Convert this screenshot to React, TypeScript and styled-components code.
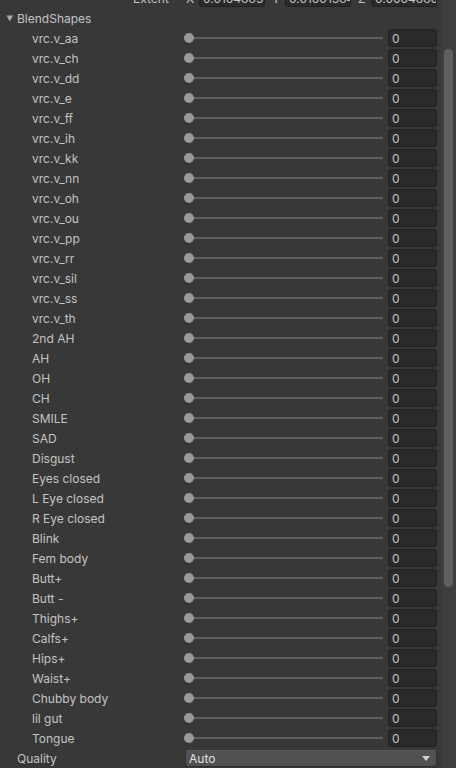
import React from "react";
import styled, { createGlobalStyle } from "styled-components";

const Global = createGlobalStyle`
  html, body { margin: 0; padding: 0; background: #383838; }
  body { font-family: Inter, "Noto Sans", sans-serif; font-size: 12px; color: #c4c4c4; }
  #root { width: 456px; height: 768px; overflow: hidden; }
`;

const Frame = styled.div`
  display: flex;
  width: 456px;
  height: 768px;
  overflow: hidden;
  background: #383838;
`;

const Content = styled.div`
  flex: 1;
  min-width: 0;
  display: flex;
  flex-direction: column;
  padding-right: 4px;
  margin-top: -12px;
`;

const ScrollTrack = styled.div`
  width: 15px;
  flex: none;
  background: #3e3e3e;
  padding: 49px 3px 0 3px;
  box-sizing: border-box;
`;

const ScrollThumb = styled.div`
  width: 9px;
  height: 538px;
  border-radius: 5px;
  background: #5f5f5f;
`;

const ExtentRow = styled.div`
  height: 20px;
  display: flex;
  align-items: center;
`;

const ExtentLabel = styled.span`
  width: 186px;
  padding-left: 133px;
  box-sizing: border-box;
  flex: none;
`;

const AxisGroup = styled.div`
  flex: 1;
  min-width: 0;
  display: flex;
  align-items: center;
  gap: 5px;
  margin-right: 7px;
  &:last-child { margin-right: 0; }
`;

const Axis = styled.span`
  width: 8px;
  flex: none;
`;

const NumberBox = styled.div`
  box-sizing: border-box;
  height: 18px;
  min-width: 0;
  background: #2a2a2a;
  border: 1px solid #212121;
  border-radius: 3px;
  padding: 0 3px;
  display: flex;
  align-items: center;
  overflow: hidden;
  white-space: nowrap;
  color: #c4c4c4;
`;

const ExtentBox = styled(NumberBox)`
  flex: 1;
`;

const HeaderRow = styled.div`
  height: 20px;
  display: flex;
  align-items: center;
  padding-left: 5px;
  gap: 3px;
`;

const Row = styled.div`
  height: 20px;
  display: grid;
  grid-template-columns: 184px minmax(0, 1fr) 49px;
  align-items: center;
`;

const Label = styled.span<{ $indent: number }>`
  padding-left: ${(p) => p.$indent}px;
  white-space: nowrap;
  overflow: hidden;
`;

const Slider = styled.div`
  position: relative;
  height: 20px;
`;

const Track = styled.div`
  position: absolute;
  left: 5px;
  right: 5px;
  top: 9px;
  height: 2px;
  background: #5e5e5e;
`;

const Thumb = styled.div`
  position: absolute;
  left: 0;
  top: 5px;
  width: 10px;
  height: 10px;
  border-radius: 50%;
  background: #999999;
`;

const Dropdown = styled.div`
  grid-column: 2 / 4;
  margin-left: 1px;
  box-sizing: border-box;
  height: 17px;
  background: #515151;
  border: 1px solid #303030;
  border-top-color: #585858;
  border-radius: 3px;
  display: flex;
  align-items: center;
  justify-content: space-between;
  padding: 0 6px 0 3px;
  color: #e0e0e0;
`;

const shapes = [
  "vrc.v_aa", "vrc.v_ch", "vrc.v_dd", "vrc.v_e", "vrc.v_ff", "vrc.v_ih",
  "vrc.v_kk", "vrc.v_nn", "vrc.v_oh", "vrc.v_ou", "vrc.v_pp", "vrc.v_rr",
  "vrc.v_sil", "vrc.v_ss", "vrc.v_th", "2nd AH", "AH", "OH", "CH", "SMILE",
  "SAD", "Disgust", "Eyes closed", "L Eye closed", "R Eye closed", "Blink",
  "Fem body", "Butt+", "Butt -", "Thighs+", "Calfs+", "Hips+", "Waist+",
  "Chubby body", "lil gut", "Tongue",
];

export default function App() {
  return (
    <>
      <Global />
      <Frame>
        <Content>
          <ExtentRow>
            <ExtentLabel>Extent</ExtentLabel>
            <AxisGroup>
              <Axis>X</Axis>
              <ExtentBox>0.01648853</ExtentBox>
            </AxisGroup>
            <AxisGroup>
              <Axis>Y</Axis>
              <ExtentBox>0.01601384</ExtentBox>
            </AxisGroup>
            <AxisGroup>
              <Axis>Z</Axis>
              <ExtentBox>0.00648808</ExtentBox>
            </AxisGroup>
          </ExtentRow>
          <HeaderRow>
            <svg width="9" height="8" viewBox="0 0 9 8">
              <path d="M1.5 1.5 L8 1.5 L4.75 7.5 Z" fill="#a8a8a8" />
            </svg>
            <span>BlendShapes</span>
          </HeaderRow>
          {shapes.map((s) => (
            <Row key={s}>
              <Label $indent={32}>{s}</Label>
              <Slider>
                <Track />
                <Thumb />
              </Slider>
              <NumberBox>0</NumberBox>
            </Row>
          ))}
          <Row>
            <Label $indent={17}>Quality</Label>
            <Dropdown>
              <span>Auto</span>
              <svg width="8" height="5" viewBox="0 0 8 5">
                <path d="M0 0 L8 0 L4 5 Z" fill="#d0d0d0" />
              </svg>
            </Dropdown>
          </Row>
        </Content>
        <ScrollTrack>
          <ScrollThumb />
        </ScrollTrack>
      </Frame>
    </>
  );
}
